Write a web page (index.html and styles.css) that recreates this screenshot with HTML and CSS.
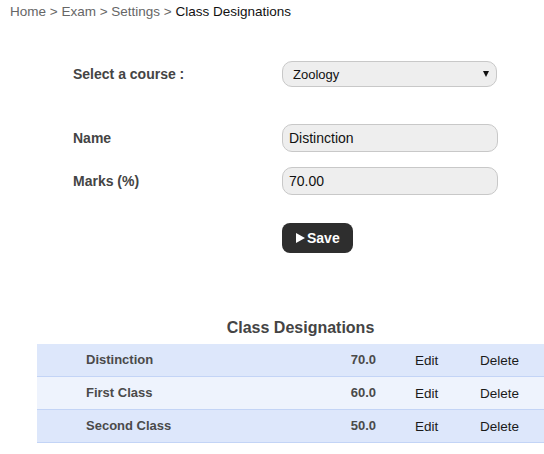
FILE: index.html
```html
<!DOCTYPE html>
<html lang="en">
<head>
    <meta charset="UTF-8">
    <title>Class Designations</title>
    <link rel="stylesheet" href="styles.css">
</head>
<body>

    <div class="crumbs">
        <a href="#">Home</a> &gt; <a href="#">Exam</a> &gt; <a href="#">Settings</a> &gt; <span class="current">Class Designations</span>
    </div>

    <div class="form">
        <div class="row row-course">
            <label>Select a course :</label>
            <div class="selwrap">
                <select>
                    <option>Zoology</option>
                    <option>Botany</option>
                </select>
            </div>
        </div>
        <div class="row row-name">
            <label>Name</label>
            <input type="text" value="Distinction">
        </div>
        <div class="row row-marks">
            <label>Marks (%)</label>
            <input type="text" value="70.00">
        </div>
        <div class="row row-btn">
            <span></span>
            <button class="save">
                <svg width="9" height="10" viewBox="0 0 9 10"><polygon points="0,0 9,5 0,10" fill="#fff"/></svg>
                Save
            </button>
        </div>
    </div>

    <div class="designations">
        <h3>Class Designations</h3>
        <div class="drow">
            <span class="dname">Distinction</span>
            <span class="dmarks">70.0</span>
            <a class="edit" href="#">Edit</a>
            <a class="del" href="#">Delete</a>
        </div>
        <div class="drow alt">
            <span class="dname">First Class</span>
            <span class="dmarks">60.0</span>
            <a class="edit" href="#">Edit</a>
            <a class="del" href="#">Delete</a>
        </div>
        <div class="drow">
            <span class="dname">Second Class</span>
            <span class="dmarks">50.0</span>
            <a class="edit" href="#">Edit</a>
            <a class="del" href="#">Delete</a>
        </div>
    </div>

</body>
</html>
```

FILE: styles.css
```css
*{
    margin: 0px;
    padding: 0px;
    box-sizing: border-box;
}
html, body{
    overflow: hidden;
}
body{
    font-family: "Liberation Sans", Arial, sans-serif;
    color: #222;
    background: white;
}
.crumbs{
    padding: 4px 10px 0px 10px;
    font-size: 13.5px;
    line-height: 16px;
    color: #666;
}
.crumbs a{
    color: #666;
    text-decoration: none;
}
.crumbs .current{
    color: #111;
}
.form{
    margin-top: 41px;
    margin-left: 73px;
}
.row{
    display: grid;
    grid-template-columns: 209px 216px;
    align-items: center;
}
.row label{
    font-size: 14px;
    font-weight: bold;
    color: #444;
}
.row-name{
    margin-top: 37px;
}
.row-marks{
    margin-top: 15px;
}
.row-btn{
    margin-top: 28px;
}
.selwrap{
    position: relative;
    width: 215px;
}
.selwrap::after{
    content: "";
    position: absolute;
    right: 8px;
    top: 10px;
    border-left: 3px solid transparent;
    border-right: 3px solid transparent;
    border-top: 6px solid #111;
}
select{
    appearance: none;
    -webkit-appearance: none;
    width: 215px;
    height: 26px;
    border: 1px solid #c8c8c8;
    border-radius: 10px;
    background-color: #eee;
    padding-left: 10px;
    font-family: "Liberation Sans", Arial, sans-serif;
    font-size: 13px;
    color: #111;
    outline: none;
}
.row input{
    width: 216px;
    height: 28px;
    border: 1px solid #c8c8c8;
    border-radius: 10px;
    background-color: #eee;
    padding-left: 6px;
    font-family: "Liberation Sans", Arial, sans-serif;
    font-size: 14px;
    color: #111;
    outline: none;
}
.save{
    width: 71px;
    height: 30px;
    border: none;
    border-radius: 8px;
    background-color: #2e2e2e;
    color: white;
    font-family: "Liberation Sans", Arial, sans-serif;
    font-size: 14px;
    font-weight: bold;
    display: flex;
    align-items: center;
    gap: 2px;
    padding-left: 14px;
    cursor: pointer;
}
.designations{
    margin-top: 66px;
    margin-left: 37px;
    width: 527px;
}
.designations h3{
    text-align: center;
    font-size: 16px;
    line-height: 18px;
    color: #444;
    margin-bottom: 7px;
}
.drow{
    display: grid;
    grid-template-columns: 290px 49px 104px 1fr;
    align-items: center;
    height: 33px;
    padding-bottom: 2px;
    background-color: #dde7fb;
    border-bottom: 1px solid #c3d4f6;
    font-size: 13px;
}
.drow.alt{
    background-color: #eef3fd;
}
.dname{
    padding-left: 49px;
    font-weight: bold;
    color: #4a4a4a;
}
.dmarks{
    text-align: right;
    font-weight: bold;
    color: #4a4a4a;
}
.drow a{
    color: #1a1a1a;
    text-decoration: none;
    font-size: 13.5px;
    padding-top: 2px;
}
.edit{
    padding-left: 39px;
}
```
